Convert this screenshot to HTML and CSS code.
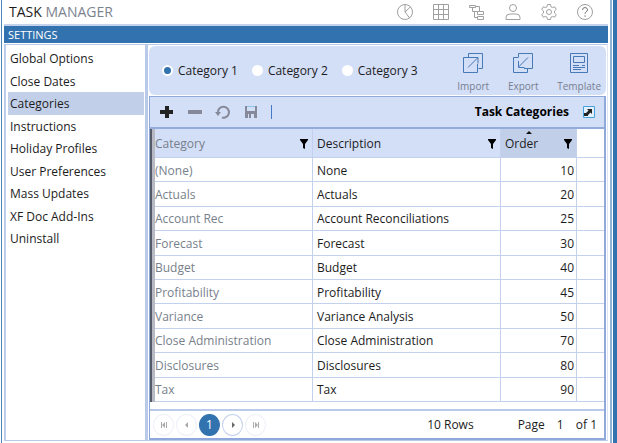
FILE: index.html
```html
<!DOCTYPE html>
<html lang="en">
<head>
    <meta charset="UTF-8">
    <meta name="viewport" content="width=device-width, initial-scale=1.0">
    <title>Task Manager - Settings</title>
    <link rel="stylesheet" href="styles.css">
</head>
<body>
    <div class="window">
        <header class="topbar">
            <h1>TASK <span>MANAGER</span></h1>
            <nav class="top-icons">
                <button type="button" aria-label="Dashboard"><svg width="18" height="18" viewBox="0 0 18 18"><circle cx="9" cy="9" r="7.5"/><path d="M9 1.5V9L14.5 3.8M9 9l4.6 6"/></svg></button>
                <button type="button" aria-label="Grid"><svg width="18" height="18" viewBox="0 0 18 18"><path d="M1.500 1.500h15v15h-15zM6.500 1.500v15M11.500 1.500v15M1.500 6.500h15M1.500 11.500h15"/></svg></button>
                <button type="button" aria-label="Workflow"><svg width="18" height="18" viewBox="0 0 18 18"><path d="M1.500 2.500h6v2h-6zM9.500 8.500h6v3h-6zM9.500 13.500h6v3h-6zM4.500 5v3.500h5M6.500 8.500v6h3M8 3.500h3.500v5"/></svg></button>
                <button type="button" aria-label="User"><svg width="18" height="18" viewBox="0 0 18 18"><circle cx="9" cy="5" r="3.500"/><path d="M2 16.500v-2q0-3.500 4-3.500h6q4 0 4 3.500v2z"/></svg></button>
                <button type="button" aria-label="Settings"><svg width="18" height="18" viewBox="0 0 18 18"><circle cx="9" cy="9" r="2.500"/><path d="M7.500 1.500h3l.5 2.300 1.400.8 2.300-.8 1.500 2.600-1.700 1.600v2l1.700 1.600-1.500 2.600-2.300-.8-1.400.8-.5 2.300h-3L7 14.200l-1.400-.8-2.300.8-1.500-2.600L3.500 10V8L1.800 6.400l1.500-2.600 2.300.8L7 3.800z"/></svg></button>
                <button type="button" aria-label="Help"><svg width="18" height="18" viewBox="0 0 18 18"><circle cx="9" cy="9" r="7.500"/><path class="bold" d="M6.500 7q0-2.500 2.500-2.500T11.500 7Q11.500 8.200 10 9q-1 .6-1 1.800M9 12.300v1.500"/></svg></button>
            </nav>
        </header>
        <h2 class="section-title">SETTINGS</h2>

        <div class="content">
            <nav class="sidebar">
                <a href="#global">Global Options</a>
                <a href="#dates">Close Dates</a>
                <a href="#categories" class="active">Categories</a>
                <a href="#instructions">Instructions</a>
                <a href="#holidays">Holiday Profiles</a>
                <a href="#preferences">User Preferences</a>
                <a href="#updates">Mass Updates</a>
                <a href="#addins">XF Doc Add-Ins</a>
                <a href="#uninstall">Uninstall</a>
            </nav>

            <main class="main">
                <div class="options">
                    <div class="radios">
                        <label><input type="radio" name="category" checked>Category 1</label>
                        <label><input type="radio" name="category">Category 2</label>
                        <label><input type="radio" name="category">Category 3</label>
                    </div>
                    <div class="actions">
                        <button type="button"><svg width="22" height="22" viewBox="0 0 22 22"><path d="M6.500 5.500V1.500h14v15H16.500M10 5.500H1.500v15h14V12M6 15.500 15.500 6M9 5.500h7v6"/></svg>Import</button>
                        <button type="button"><svg width="22" height="22" viewBox="0 0 22 22"><path d="M6.500 5.500V1.500h14v15H12M6 5.500H1.500v15h14V16M16 5.500 6.500 15M6.500 9v6.500h6"/></svg>Export</button>
                        <button type="button"><svg width="22" height="22" viewBox="0 0 22 22"><path d="M2.500 1.500h17v19h-17zM5.500 4.500h11v6h-11zM5 13.500h6M5 15.500h12M5 17.500h8M14 13.500h3"/></svg>Template</button>
                    </div>
                </div>

                <section class="grid">
                    <div class="toolbar">
                        <div class="tools">
                            <button type="button" aria-label="Add row"><svg width="16" height="16" viewBox="0 0 16 16"><path fill="#222" d="M6 2h4v4h4v4h-4v4H6v-4H1V6h5z"/></svg></button>
                            <button type="button" aria-label="Delete row"><svg width="16" height="16" viewBox="0 0 16 16"><path fill="#85899a" d="M1 6h14v4H1z"/></svg></button>
                            <button type="button" aria-label="Undo"><svg width="16" height="16" viewBox="0 0 16 16"><path fill="none" stroke="#85899a" stroke-width="2" d="M3 8.500A5.500 5.500 0 1 1 7 13.500"/><path fill="#85899a" d="M0 8h6l-3 4z"/></svg></button>
                            <button type="button" aria-label="Save"><svg width="16" height="16" viewBox="0 0 16 16"><path fill="#85899a" d="M2 2h12v12H2z"/><path fill="#d3def7" d="M4 3h8v4H4zM5 10h6v4H5z"/><path fill="#8dc3e8" d="M4 2h8v1H4z"/><path fill="#85899a" d="M6 10h2v4H6z"/></svg></button>
                            <span class="divider"></span>
                        </div>
                        <h3>Task Categories</h3>
                        <button type="button" aria-label="Open in new window"><svg width="12" height="12" viewBox="0 0 12 12"><path fill="#e4f1fc" stroke="#45a3db" d="M.5.5h11v11H.5z"/><path fill="#222" d="M4 3h5v5L7.500 6.500 5 9v1H1V7h2l2.500-2.500z"/></svg></button>
                    </div>

                    <table>
                        <colgroup>
                            <col class="col-handle"><col class="col-category"><col class="col-description"><col class="col-order"><col class="col-end">
                        </colgroup>
                        <thead>
                            <tr>
                                <td class="handle"></td>
                                <th><div>Category<svg width="8" height="10" viewBox="0 0 8 10"><path d="M0 0h8v1L5 5v5L3 9V5L0 1z"/></svg></div></th>
                                <th><div>Description<svg width="8" height="10" viewBox="0 0 8 10"><path d="M0 0h8v1L5 5v5L3 9V5L0 1z"/></svg></div></th>
                                <th class="sorted" aria-sort="ascending"><div>Order<svg width="8" height="10" viewBox="0 0 8 10"><path d="M0 0h8v1L5 5v5L3 9V5L0 1z"/></svg></div></th>
                                <td></td>
                            </tr>
                        </thead>
                        <tbody>
                            <tr><td class="handle"></td><td>(None)</td><td>None</td><td>10</td><td></td></tr>
                            <tr><td class="handle"></td><td>Actuals</td><td>Actuals</td><td>20</td><td></td></tr>
                            <tr><td class="handle"></td><td>Account Rec</td><td>Account Reconciliations</td><td>25</td><td></td></tr>
                            <tr><td class="handle"></td><td>Forecast</td><td>Forecast</td><td>30</td><td></td></tr>
                            <tr><td class="handle"></td><td>Budget</td><td>Budget</td><td>40</td><td></td></tr>
                            <tr><td class="handle"></td><td>Profitability</td><td>Profitability</td><td>45</td><td></td></tr>
                            <tr><td class="handle"></td><td>Variance</td><td>Variance Analysis</td><td>50</td><td></td></tr>
                            <tr><td class="handle"></td><td>Close Administration</td><td>Close Administration</td><td>70</td><td></td></tr>
                            <tr><td class="handle"></td><td>Disclosures</td><td>Disclosures</td><td>80</td><td></td></tr>
                            <tr><td class="handle"></td><td>Tax</td><td>Tax</td><td>90</td><td></td></tr>
                        </tbody>
                    </table>

                    <footer class="pager">
                        <div class="pages">
                            <button type="button" aria-label="First page" disabled><svg width="6" height="6" viewBox="0 0 6 6"><path d="M0 0h1v6H0zM4 0v6L1 3zM5 0h1v6H5z"/></svg></button>
                            <button type="button" aria-label="Previous page" disabled><svg width="6" height="6" viewBox="0 0 6 6"><path d="M4 0v6L1 3z"/></svg></button>
                            <button type="button" class="current">1</button>
                            <button type="button" class="next" aria-label="Next page"><svg width="6" height="6" viewBox="0 0 6 6"><path d="M2 0v6l3-3z"/></svg></button>
                            <button type="button" aria-label="Last page" disabled><svg width="6" height="6" viewBox="0 0 6 6"><path d="M5 0h1v6H5zM2 0v6l3-3zM0 0h1v6H0z"/></svg></button>
                        </div>
                        <span>10 Rows</span>
                        <label class="page-number">Page <input type="text" value="1"> of 1</label>
                    </footer>
                </section>
            </main>
        </div>
    </div>
</body>
</html>
```
FILE: styles.css
```css
* {
    box-sizing: border-box;
}
body {
    margin: 0;
    font-family: "Open Sans", "Noto Sans", sans-serif;
    font-size: 12px;
    line-height: 16px;
    color: #1c1c1c;
    background-color: #fff;
}
h1, h2, h3 {
    margin: 0;
    font-weight: normal;
}
button {
    display: flex;
    align-items: center;
    justify-content: center;
    padding: 0;
    border: none;
    background: none;
    font: inherit;
    color: inherit;
}
a {
    color: inherit;
    text-decoration: none;
}
.window {
    display: flex;
    flex-direction: column;
    min-height: 100vh;
    margin-left: 1px;
    padding-left: 2px;
    padding-right: 5px;
    border-left: 1px solid #4b86bd;
    border-right: 4px solid #3272ae;
    background: linear-gradient(#8fb4d8, #8fb4d8) right 1px top / 2px 100% no-repeat;
}

/* Header */
.topbar {
    display: flex;
    align-items: center;
    justify-content: space-between;
    height: 26px;
    padding: 0 14px 0 5px;
    border-bottom: 2px solid #c5d2ec;
}
.topbar h1 {
    font-size: 14px;
    line-height: 24px;
}
.topbar h1 span {
    color: #7c8390;
}
.top-icons {
    display: flex;
    gap: 18px;
}
.top-icons svg {
    fill: none;
    stroke: #a0a0a0;
}
.top-icons .bold {
    stroke: #777;
}
.section-title {
    height: 17px;
    padding-left: 4px;
    font-size: 11px;
    line-height: 18px;
    color: #fff;
    background-color: #3272ae;
}

/* Page body */
.content {
    display: flex;
    flex: 1;
    margin-top: 1px;
    margin-bottom: 2px;
    border: 1px solid #b9c9ea;
    border-right-color: #dfe7f6;
}
.sidebar {
    flex: 0 0 143px;
    padding: 2px 1px 0 2px;
    border-left: 1px solid #c3d1ee;
    border-right: 3px solid #b9c9ea;
}
.sidebar a {
    display: block;
    height: 23px;
    padding-left: 2px;
    line-height: 24px;
}
.sidebar a:nth-child(even) {
    height: 22px;
}
.sidebar .active {
    background-color: #c2cfe9;
}
.main {
    display: flex;
    flex: 1;
    flex-direction: column;
    min-width: 0;
    padding: 1px 1px 0 1px;
}
.options {
    display: flex;
    align-items: center;
    justify-content: space-between;
    height: 49px;
    margin-bottom: 1px;
    padding: 0 5px 0 13px;
    border-radius: 6px;
    background-color: #d3def7;
}
.radios {
    display: flex;
    gap: 14px;
}
.radios label {
    display: flex;
    align-items: center;
    gap: 5px;
}
.radios input {
    appearance: none;
    width: 11px;
    height: 11px;
    margin: 0;
    border-radius: 50%;
    background-color: #fff;
}
.radios input:checked {
    border: 2px solid #fff;
    background-color: #3272ae;
}
.actions {
    display: flex;
    gap: 18px;
}
.actions button {
    flex-direction: column;
    gap: 5px;
    min-width: 32px;
    padding-top: 3px;
    font-size: 10px;
    line-height: 14px;
    color: #777f91;
}
.actions svg {
    fill: none;
    stroke: #4679b6;
}

/* Grid */
.grid {
    display: flex;
    flex: 1;
    flex-direction: column;
    border: 1px solid #8fa9dc;
    border-right-width: 2px;
    border-bottom-width: 2px;
}
.toolbar {
    display: flex;
    align-items: center;
    gap: 14px;
    height: 32px;
    padding: 0 9px;
    border-bottom: 2px solid #93abdd;
    background-color: #d3def7;
}
.toolbar h3 {
    margin-left: auto;
    font-size: 12px;
    font-weight: bold;
    color: #000;
}
.tools {
    display: flex;
    align-items: center;
    gap: 12px;
}
.divider {
    width: 1px;
    height: 14px;
    background-color: #4679c9;
}
table {
    width: 100%;
    height: 273px;
    table-layout: fixed;
    border-collapse: separate;
    border-spacing: 0;
}
.col-handle {
    width: 5px;
}
.col-category {
    width: 158px;
}
.col-description {
    width: 188px;
}
.col-order {
    width: 76px;
}
th, td {
    padding: 2px 4px 0 4px;
    border-right: 1px solid #c3d0ee;
    border-bottom: 1px solid #c3d0ee;
    text-align: left;
    font-weight: normal;
}
th {
    height: 29px;
    background-color: #d3def7;
}
th div {
    display: flex;
    align-items: center;
    justify-content: space-between;
}
.handle {
    padding: 0;
    border-right: 3px solid #b8bac3;
    border-bottom: none;
    background-color: #555a68;
}
th:nth-child(2), td:nth-child(2) {
    padding-left: 0;
    color: #777f8b;
}
td:nth-child(4) {
    padding-right: 2px;
    text-align: right;
}
.sorted {
    position: relative;
    background-color: #c2cfe9;
}
.sorted::before {
    content: "";
    position: absolute;
    top: 2px;
    left: 25px;
    border: 3px solid transparent;
    border-top: none;
    border-bottom-color: #111;
}
td:last-child {
    border-right: none;
}

/* Pager */
.pager {
    display: flex;
    flex: 1;
    align-items: center;
    margin-top: 7px;
    padding: 0 7px 0 3px;
    border-top: 2px solid #b9c9ea;
}
.pages {
    display: flex;
    gap: 2px;
    margin-right: auto;
}
.pages button {
    width: 21px;
    height: 22px;
    border: 1px solid #edf0f8;
    border-radius: 50%;
}
.pages svg {
    fill: #aaa;
}
.pages .current {
    border-color: #3272ae;
    color: #fff;
    background-color: #3272ae;
}
.pages .next {
    border-color: #c3d0ee;
}
.pages .next svg {
    fill: #666;
}
.page-number {
    display: flex;
    align-items: center;
    margin-left: 44px;
}
.page-number input {
    width: 31px;
    padding: 0;
    border: none;
    font: inherit;
    color: inherit;
    text-align: center;
}
```
